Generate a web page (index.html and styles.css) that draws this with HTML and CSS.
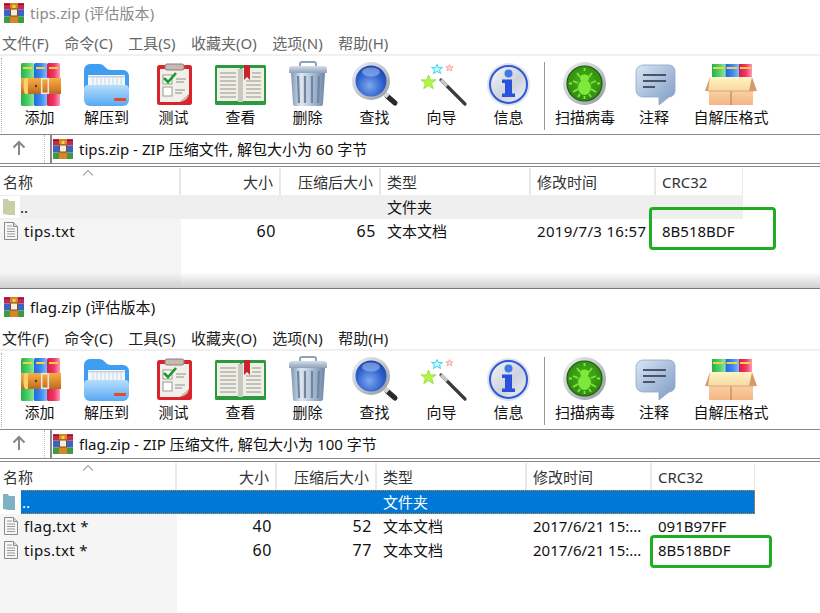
FILE: index.html
```html
<!DOCTYPE html>
<html lang="zh">
<head>
<meta charset="utf-8">
<title>tips.zip / flag.zip</title>
<link rel="stylesheet" href="styles.css">
</head>
<body>
<svg class="defs" aria-hidden="true">
  <defs>
    <linearGradient id="gGreen" x1="0" x2="1" y1="0" y2="0"><stop offset="0" stop-color="#25b04a"/><stop offset=".55" stop-color="#4fd06a"/><stop offset="1" stop-color="#8ae89a"/></linearGradient>
    <linearGradient id="gBlue" x1="0" x2="1" y1="0" y2="0"><stop offset="0" stop-color="#2468dc"/><stop offset=".55" stop-color="#3f8cf0"/><stop offset="1" stop-color="#7fbcff"/></linearGradient>
    <linearGradient id="gRed" x1="0" x2="1" y1="0" y2="0"><stop offset="0" stop-color="#d81c40"/><stop offset=".55" stop-color="#f0386a"/><stop offset="1" stop-color="#ff9ab8"/></linearGradient>
    <linearGradient id="gBelt" x1="0" x2="0" y1="0" y2="1"><stop offset="0" stop-color="#f4b044"/><stop offset=".5" stop-color="#e08c30"/><stop offset="1" stop-color="#b86a1e"/></linearGradient>
    <linearGradient id="gFolderFront" x1="0" x2="0" y1="0" y2="1"><stop offset="0" stop-color="#b6defc"/><stop offset="1" stop-color="#58a8f4"/></linearGradient>
    <linearGradient id="gMetal" x1="0" x2="1" y1="0" y2="0"><stop offset="0" stop-color="#7f97b4"/><stop offset=".3" stop-color="#dfe7ef"/><stop offset=".65" stop-color="#a8bbd0"/><stop offset="1" stop-color="#6e86a4"/></linearGradient>
    <linearGradient id="gLid" x1="0" x2="0" y1="0" y2="1"><stop offset="0" stop-color="#d6dfe9"/><stop offset="1" stop-color="#8ba1bb"/></linearGradient>
    <radialGradient id="gLens" cx=".45" cy=".65" r=".7"><stop offset="0" stop-color="#7fa8ee"/><stop offset=".6" stop-color="#2f62cf"/><stop offset="1" stop-color="#1a3f9e"/></radialGradient>
    <linearGradient id="gRing" x1="0" x2="1" y1="0" y2="1"><stop offset="0" stop-color="#eef1f5"/><stop offset=".5" stop-color="#c2c8d0"/><stop offset="1" stop-color="#8f959d"/></linearGradient>
    <linearGradient id="gInfo" x1="0" x2="1" y1="0" y2="1"><stop offset="0" stop-color="#f6f7f9"/><stop offset=".55" stop-color="#cdd3dc"/><stop offset="1" stop-color="#eef0f4"/></linearGradient>
    <radialGradient id="gBug" cx=".5" cy=".45" r=".6"><stop offset="0" stop-color="#48b41a"/><stop offset="1" stop-color="#2e8410"/></radialGradient>
    <linearGradient id="gNote" x1="0" x2="1" y1="0" y2="1"><stop offset="0" stop-color="#dbe6f4"/><stop offset=".5" stop-color="#a9bfdc"/><stop offset="1" stop-color="#7f9ac2"/></linearGradient>
    <linearGradient id="gBox" x1="0" x2="0" y1="0" y2="1"><stop offset="0" stop-color="#f9cfa2"/><stop offset="1" stop-color="#f4b586"/></linearGradient>
    <linearGradient id="gFlap" x1="0" x2="0" y1="0" y2="1"><stop offset="0" stop-color="#fff4c4"/><stop offset="1" stop-color="#f7d9a2"/></linearGradient>
  </defs>

  <symbol id="i-add" viewBox="0 0 56 46">
    <rect x="9" y="2" width="13" height="43" rx="1.5" fill="url(#gGreen)"/>
    <rect x="22" y="2" width="13" height="43" rx="1.5" fill="url(#gBlue)"/>
    <rect x="35" y="2" width="13" height="43" rx="1.5" fill="url(#gRed)"/>
    <g fill="#f5d23c"><rect x="11" y="6" width="9" height="2"/><rect x="24" y="6" width="9" height="2"/><rect x="37" y="6" width="9" height="2"/></g>
    <rect x="9" y="17" width="40" height="16" fill="url(#gBelt)"/>
    <path d="M13 17h3v16h-3c-2-3-2-13 0-16z" fill="#f8d26a"/>
    <rect x="29.7" y="17.7" width="6.6" height="14.6" fill="none" stroke="#eee6d8" stroke-width="1.6"/>
    <circle cx="24" cy="25" r="1.2" fill="#5a3410"/>
  </symbol>

  <symbol id="i-extract" viewBox="0 0 56 46">
    <path d="M5 9a6 6 0 0 1 6-6h9c3 0 4 1 6 3s3 3 6 3h12a6 6 0 0 1 6 6v24H5z" fill="#3f9df2"/>
    <path d="M9 14h37v14H9z" fill="#f3f7fb"/>
    <path d="M14 16v10M18 16v10M22 16v10M26 16v10M30 16v10M34 16v10M38 16v10M42 16v10" stroke="#c6d6e6" stroke-width="1"/>
    <rect x="9" y="15" width="37" height="1.4" fill="#c6d0da"/>
    <path d="M5 28c0-2 1-4 4-4h37c3 0 4 2 4 4v11a6 6 0 0 1-6 6H11a6 6 0 0 1-6-6z" fill="url(#gFolderFront)"/>
    <rect x="35" y="37" width="12" height="3" rx=".5" fill="#e8492a"/>
  </symbol>

  <symbol id="i-test" viewBox="0 0 56 46">
    <rect x="11" y="4" width="35" height="40" rx="2.5" fill="#d9242e"/>
    <path d="M14 8h29v25l-9 8H14z" fill="#f2f0ea"/>
    <path d="M34 41l9-8c-1 5-4 7-9 8z" fill="#c9c5bb"/>
    <rect x="19" y="3" width="19" height="6" rx="2" fill="#c7b9b4" stroke="#8f7d78" stroke-width="1"/>
    <rect x="17" y="14" width="9" height="9" fill="#fff" stroke="#9a9a90"/>
    <rect x="17" y="26" width="9" height="9" fill="#fff" stroke="#9a9a90"/>
    <path d="M18 17l4 4 8-9" fill="none" stroke="#1e9a2c" stroke-width="2.6"/>
    <path d="M30 18h10M30 21h8M29 29h10M29 32h7" stroke="#8e8e88" stroke-width="1.2"/>
  </symbol>

  <symbol id="i-view" viewBox="0 0 56 46">
    <rect x="2" y="4" width="51" height="40" rx="1.5" fill="#2a9a3c"/>
    <path d="M4 7h22c1 0 2 1 2 2 0-1 1-2 2-2h21v33H30c-1 0-2 .6-2 1.6 0-1-1-1.6-2-1.6H4z" fill="#efefe8"/>
    <rect x="25" y="8" width="5" height="33" fill="#c8c8c0"/>
    <path d="M7 12h16M7 16h16M7 20h16M7 24h16M7 28h16M7 32h16M7 36h16M39 12h9M39 16h9M33 20h15M33 24h15M33 28h15M33 32h15M33 36h15" stroke="#b2b2a8" stroke-width="1.3"/>
    <path d="M31 4h6v15l-3-3-3 3z" fill="#c8242e"/>
  </symbol>

  <symbol id="i-del" viewBox="0 0 56 46">
    <path d="M20 7V3a2 2 0 0 1 2-2h12a2 2 0 0 1 2 2v4" fill="none" stroke="#8fa3ba" stroke-width="2"/>
    <path d="M9 8c0-2 1-3 3-3h32c2 0 3 1 3 3v4H9z" fill="url(#gLid)"/>
    <path d="M11 12h34l-2 31a2 2 0 0 1-2 2H15a2 2 0 0 1-2-2z" fill="url(#gMetal)"/>
    <path d="M18 15l1 27M25 15v27M32 15v27M39 15l-1 27" stroke="#6f87a6" stroke-width="2.2"/>
  </symbol>

  <symbol id="i-find" viewBox="0 0 56 46">
    <path d="M40 35l8 7" stroke="#2a2a2a" stroke-width="5" stroke-linecap="round"/>
    <path d="M36 31l5 4.500" stroke="#d5d9df" stroke-width="4.500"/>
    <circle cx="24" cy="20" r="19" fill="url(#gRing)"/>
    <circle cx="24" cy="20" r="15.500" fill="url(#gLens)"/>
    <ellipse cx="24" cy="11" rx="9" ry="4.500" fill="#a9c4f2" opacity=".55"/>
  </symbol>

  <symbol id="i-wizard" viewBox="0 0 56 46">
    <path d="M27 19l24 24" stroke="#3a3a3a" stroke-width="3.200" stroke-linecap="round"/>
    <path d="M27 19l6 6" stroke="#c8c8c8" stroke-width="3.200"/>
    <path d="M14.500 14l2 5 5.500-.2-4.300 3.500 1.600 5.400-4.800-3.100-4.800 3.100 1.600-5.400L7 18.800l5.500.2z" fill="#b4f44a" stroke="#8ce02c" stroke-width=".8"/>
    <path d="M23 3.500l1.500 3 4-.1-3 2.500 1.100 3.700-3.600-2.200-3.600 2.200 1.100-3.700-3-2.500 4 .1z" fill="#c4f6ff" stroke="#38d4f4" stroke-width="1"/>
    <path d="M35.500 3.500l1 2.300 2.600-.1-2 1.600.8 2.600-2.400-1.500-2.400 1.500.8-2.600-2-1.600 2.600.1z" fill="#ffdcdc" stroke="#f8a8a8" stroke-width="1"/>
  </symbol>

  <symbol id="i-info" viewBox="0 0 56 46">
    <circle cx="27.500" cy="23.500" r="21.500" fill="#dfe3e9"/>
    <circle cx="27.500" cy="23.500" r="18.500" fill="url(#gInfo)" stroke="#2f58d8" stroke-width="2"/>
    <circle cx="27.500" cy="12.500" r="4" fill="#3f7ae8"/>
    <path d="M21 18.500h10v14h3v3.500H21v-3.500h3v-10.500h-3z" fill="#2a50e0"/>
  </symbol>

  <symbol id="i-scan" viewBox="0 0 56 46">
    <circle cx="27.500" cy="22.500" r="21.500" fill="url(#gRing)"/>
    <circle cx="27.500" cy="22.500" r="17.500" fill="url(#gBug)" stroke="#1f5c08" stroke-width="1.200"/>
    <g fill="none" stroke="#7fe83c" stroke-width="1.800">
      <path d="M27.500 7v3M27.500 35v3M12 22.500h3M40 22.500h3"/>
      <path d="M20 12l3 4M35 12l-3 4M16 20l5 2M39 20l-5 2M16 31l5-3M39 31l-5-3M21 36l2-3M34 36l-2-3"/>
    </g>
    <ellipse cx="27.500" cy="17" rx="4.500" ry="3.500" fill="#7fe83c"/>
    <ellipse cx="27.500" cy="26.500" rx="6.500" ry="7.500" fill="#7fe83c"/>
  </symbol>

  <symbol id="i-note" viewBox="0 0 56 46">
    <path d="M17 4h26a6 6 0 0 1 6 6v20a6 6 0 0 1-6 6l-10 8v-8H17a7 7 0 0 1-7-7V11a7 7 0 0 1 7-7z" fill="url(#gNote)" stroke="#8ea6c8" stroke-width=".8"/>
    <path d="M17 14h23M17 20h23M17 26h12" stroke="#4a5566" stroke-width="2"/>
  </symbol>

  <symbol id="i-sfx" viewBox="0 0 56 46">
    <rect x="9" y="3" width="13.500" height="20" fill="url(#gGreen)"/>
    <rect x="22.500" y="3" width="13.500" height="20" fill="url(#gBlue)"/>
    <rect x="36" y="3" width="13" height="20" fill="url(#gRed)"/>
    <g fill="#f5d23c"><rect x="10" y="6" width="11" height="2"/><rect x="23.500" y="6" width="11" height="2"/><rect x="37" y="6" width="11" height="2"/></g>
    <path d="M2 30L7 16h42l5 14z" fill="#d49a6e"/>
    <rect x="6" y="30" width="44" height="14" fill="url(#gBox)"/>
    <path d="M7 16h42l-3 14H5z" fill="url(#gFlap)"/>
    <path d="M28 30v14" stroke="#b57a4c" stroke-width="1"/>
    <path d="M5 30h46" stroke="#d8a87c" stroke-width="1"/>
  </symbol>

  <symbol id="i-rar" viewBox="0 0 20 20">
    <rect y="0" width="20" height="6.600" fill="#c8284a"/>
    <rect y="6.600" width="20" height="6.800" fill="#3a62c8"/>
    <rect y="13.400" width="20" height="6.600" fill="#3f9a40"/>
    <rect y="1" width="20" height="1" fill="#7a1c34"/>
    <rect x="6" width="8" height="20" fill="#d98428"/>
    <rect x="6.500" y="6" width="7" height="7" fill="#f8eede" stroke="#7a5020" stroke-width="1"/>
    <rect x="8.500" y="2" width="3" height="3" fill="#f5d23c"/>
  </symbol>

  <symbol id="i-txt" viewBox="0 0 16 20">
    <path d="M1.500 1.500h9l4 4v13h-13z" fill="#f7f7f7" stroke="#8a8a8a"/>
    <path d="M10.500 1.500v4h4" fill="#dcdcdc" stroke="#8a8a8a"/>
    <path d="M4 5h5M4 8h8M4 10.500h8M4 13h8M4 15.500h8" stroke="#9a9a9a"/>
  </symbol>

  <symbol id="i-up" viewBox="0 0 16 16">
    <path d="M8 15V2M2.500 7.500L8 2l5.500 5.500" fill="none" stroke="#868686" stroke-width="2"/>
  </symbol>
</svg>

<section class="window win-a">
  <header class="title"><svg class="small-icon"><use href="#i-rar"/></svg><span>tips.zip (评估版本)</span></header>
  <nav class="menu"><span>文件(F)</span><span>命令(C)</span><span>工具(S)</span><span>收藏夹(O)</span><span>选项(N)</span><span>帮助(H)</span></nav>
  <div class="toolbar">
    <div class="tool"><svg class="tool-icon"><use href="#i-add"/></svg><span>添加</span></div>
    <div class="tool"><svg class="tool-icon"><use href="#i-extract"/></svg><span>解压到</span></div>
    <div class="tool"><svg class="tool-icon"><use href="#i-test"/></svg><span>测试</span></div>
    <div class="tool"><svg class="tool-icon"><use href="#i-view"/></svg><span>查看</span></div>
    <div class="tool"><svg class="tool-icon"><use href="#i-del"/></svg><span>删除</span></div>
    <div class="tool"><svg class="tool-icon"><use href="#i-find"/></svg><span>查找</span></div>
    <div class="tool"><svg class="tool-icon"><use href="#i-wizard"/></svg><span>向导</span></div>
    <div class="tool"><svg class="tool-icon"><use href="#i-info"/></svg><span>信息</span></div>
    <div class="sep"></div>
    <div class="tool tool-scan"><svg class="tool-icon"><use href="#i-scan"/></svg><span>扫描病毒</span></div>
    <div class="tool tool-note"><svg class="tool-icon"><use href="#i-note"/></svg><span>注释</span></div>
    <div class="tool tool-sfx"><svg class="tool-icon"><use href="#i-sfx"/></svg><span>自解压格式</span></div>
  </div>
  <div class="address">
    <div class="up"><svg class="up-icon"><use href="#i-up"/></svg></div>
    <div class="path"><svg class="small-icon"><use href="#i-rar"/></svg><span>tips.zip - ZIP 压缩文件, 解包大小为 60 字节</span></div>
  </div>
  <div class="list">
    <div class="row head"><div class="c name">名称<i class="sort"></i></div><div class="c num">大小</div><div class="c num">压缩后大小</div><div class="c">类型</div><div class="c">修改时间</div><div class="c">CRC32</div></div>
    <div class="row up-row"><div class="c name"><svg class="folder" viewBox="0 0 20 22"><path d="M3 3h5l1 2v14l-6-1z" /><path d="M9 5h6v14H9z"/></svg>..</div><div class="c num"></div><div class="c num"></div><div class="c">文件夹</div><div class="c"></div><div class="c"></div></div>
    <div class="row"><div class="c name wide"><svg class="txt"><use href="#i-txt"/></svg>tips.txt</div><div class="c num val">60</div><div class="c num val">65</div><div class="c">文本文档</div><div class="c wide">2019/7/3 16:57</div><div class="c">8B518BDF</div></div>
    <div class="mark"></div>
  </div>
</section>

<section class="window win-b">
  <header class="title"><svg class="small-icon"><use href="#i-rar"/></svg><span>flag.zip (评估版本)</span></header>
  <nav class="menu"><span>文件(F)</span><span>命令(C)</span><span>工具(S)</span><span>收藏夹(O)</span><span>选项(N)</span><span>帮助(H)</span></nav>
  <div class="toolbar">
    <div class="tool"><svg class="tool-icon"><use href="#i-add"/></svg><span>添加</span></div>
    <div class="tool"><svg class="tool-icon"><use href="#i-extract"/></svg><span>解压到</span></div>
    <div class="tool"><svg class="tool-icon"><use href="#i-test"/></svg><span>测试</span></div>
    <div class="tool"><svg class="tool-icon"><use href="#i-view"/></svg><span>查看</span></div>
    <div class="tool"><svg class="tool-icon"><use href="#i-del"/></svg><span>删除</span></div>
    <div class="tool"><svg class="tool-icon"><use href="#i-find"/></svg><span>查找</span></div>
    <div class="tool"><svg class="tool-icon"><use href="#i-wizard"/></svg><span>向导</span></div>
    <div class="tool"><svg class="tool-icon"><use href="#i-info"/></svg><span>信息</span></div>
    <div class="sep"></div>
    <div class="tool tool-scan"><svg class="tool-icon"><use href="#i-scan"/></svg><span>扫描病毒</span></div>
    <div class="tool tool-note"><svg class="tool-icon"><use href="#i-note"/></svg><span>注释</span></div>
    <div class="tool tool-sfx"><svg class="tool-icon"><use href="#i-sfx"/></svg><span>自解压格式</span></div>
  </div>
  <div class="address">
    <div class="up"><svg class="up-icon"><use href="#i-up"/></svg></div>
    <div class="path"><svg class="small-icon"><use href="#i-rar"/></svg><span>flag.zip - ZIP 压缩文件, 解包大小为 100 字节</span></div>
  </div>
  <div class="list">
    <div class="row head"><div class="c name">名称<i class="sort"></i></div><div class="c num">大小</div><div class="c num">压缩后大小</div><div class="c">类型</div><div class="c">修改时间</div><div class="c">CRC32</div></div>
    <div class="row up-row"><div class="c name"><svg class="folder" viewBox="0 0 20 22"><path d="M3 3h5l1 2v14l-6-1z" /><path d="M9 5h6v14H9z"/></svg><span class="dots">..</span></div><div class="c num"></div><div class="c num"></div><div class="c">文件夹</div><div class="c"></div><div class="c"></div></div>
    <div class="row"><div class="c name wide"><svg class="txt"><use href="#i-txt"/></svg>flag.txt *</div><div class="c num val">40</div><div class="c num val">52</div><div class="c">文本文档</div><div class="c">2017/6/21 15:...</div><div class="c">091B97FF</div></div>
    <div class="row"><div class="c name wide"><svg class="txt"><use href="#i-txt"/></svg>tips.txt *</div><div class="c num val">60</div><div class="c num val">77</div><div class="c">文本文档</div><div class="c">2017/6/21 15:...</div><div class="c">8B518BDF</div></div>
    <div class="mark"></div>
  </div>
</section>
</body>
</html>
```
FILE: styles.css
```css
* { box-sizing: border-box; }
html, body { margin: 0; padding: 0; }
body {
  width: 820px;
  height: 613px;
  overflow: hidden;
  background: #fff;
  color: #111;
  font: 15px/20px "Noto Sans", "Noto Sans CJK SC", sans-serif;
}
.defs { display: block; width: 0; height: 0; }

.window { position: relative; display: flex; flex-direction: column; }
.win-a { height: 289px; border-bottom: 1px solid #777; --title-h: 28px; --cols: 181px 100px 100px 150px 125px 87px; --col1: 181px; --ink: #666; }
.win-b { height: 324px; --title-h: 36px; --cols: 177px 100px 100px 150px 125px 103px; --col1: 177px; --ink: #222; }

.title { height: var(--title-h); flex: none; display: flex; align-items: flex-end; gap: 6px; padding-left: 4px; color: #8a8a8a; letter-spacing: .1px; }
.win-a .title { padding-bottom: 5px; }
.win-b .title { color: #111; padding-bottom: 8px; }
.small-icon { width: 20px; height: 20px; flex: none; }

.menu { flex: none; height: 26px; display: flex; gap: 15.5px; padding: 5px 0 0 2px; color: var(--ink); }
.win-b .menu { height: 24px; padding-top: 3px; }

.toolbar {
  flex: none;
  height: 81px;
  display: flex;
  padding: 4px 0 0 6px;
  border-top: 2px solid #f0f0f0;
  border-bottom: 1px solid #888;
  position: relative;
}
.toolbar::before { content: ""; position: absolute; left: 1px; top: 2px; bottom: 2px; border-left: 1px dotted #aaa; }
.tool { width: 67px; flex: none; display: flex; flex-direction: column; align-items: center; white-space: nowrap; }
.tool-icon { width: 56px; height: 46px; flex: none; margin-top: 1px; }
.tool span { line-height: 20px; }
.sep { width: 1px; height: 68px; margin: 2px 0 0 2px; background: #999; flex: none; }
.tool-scan { width: 80px; }
.tool-note { width: 58px; }
.tool-sfx { width: 96px; }

.address { flex: none; height: 29px; display: flex; border-bottom: 1px solid #888; }
.up { width: 45px; flex: none; display: flex; justify-content: center; padding-top: 5px; padding-right: 7px; border-right: 1px dotted #bbb; }
.up-icon { width: 16px; height: 16px; }
.path { flex: 1; margin-left: 5px; display: flex; align-items: center; gap: 6px; padding-left: 1px; border-left: 2px solid #888; color: #111; letter-spacing: .04px; }

.list {
  flex: 1;
  position: relative;
  margin-top: 2px;
  border-top: 1px solid #888;
  padding-top: 1px;
  background: linear-gradient(to right, #f5f5f5 var(--col1), transparent var(--col1)) 0 28px no-repeat;
}
.win-a .list {
  background:
    linear-gradient(to bottom, rgba(200,200,200,0) calc(100% - 16px), rgba(200,200,200,.85) 100%),
    linear-gradient(to right, #f5f5f5 var(--col1), transparent var(--col1)) 0 28px no-repeat;
}
.row { display: grid; grid-template-columns: var(--cols); width: max-content; height: 24px; }
.c { display: flex; align-items: center; padding-left: 6px; white-space: nowrap; overflow: hidden; color: #111; }
.num { justify-content: flex-end; padding: 0 6px 0 0; }
.name { padding-left: 3px; position: relative; }
.val { font-size: 16px; letter-spacing: .6px; padding-right: 5px; }
.wide { letter-spacing: .32px; }

.head { height: 27px; background: #fff; }
.head .c { border-right: 2px solid #e8e8e8; color: #333; }
.head .c:last-child { border-right: 1px solid #e8e8e8; }
.sort { position: absolute; left: 84px; top: 3px; width: 8px; height: 8px; border-left: 1px solid #888; border-top: 1px solid #888; transform: rotate(45deg) scale(.9, .9); }

.up-row { background: #efefef; }
.folder { width: 20px; height: 22px; flex: none; margin: 0 0 0 -2px; background: #fff; fill: #c7cfa6; }
.up-row .name { padding-left: 2px; }
.txt { width: 16px; height: 20px; flex: none; margin-right: 5px; }

.win-b .up-row { background: #0078d7; outline: 1px dotted #e8801a; outline-offset: -1px; }
.win-b .up-row .c { color: #fff; }
.win-b .up-row .name { background: linear-gradient(to right, #fff 21px, transparent 21px); }
.win-b .folder { fill: #7fb2c2; }
.dots { margin-left: 2px; }

.mark { position: absolute; border: 3px solid #1fae22; border-radius: 4px; }
.win-a .mark { left: 649px; top: 40px; width: 127px; height: 43px; }
.win-b .mark { left: 650px; top: 73px; width: 122px; height: 33px; }
```
